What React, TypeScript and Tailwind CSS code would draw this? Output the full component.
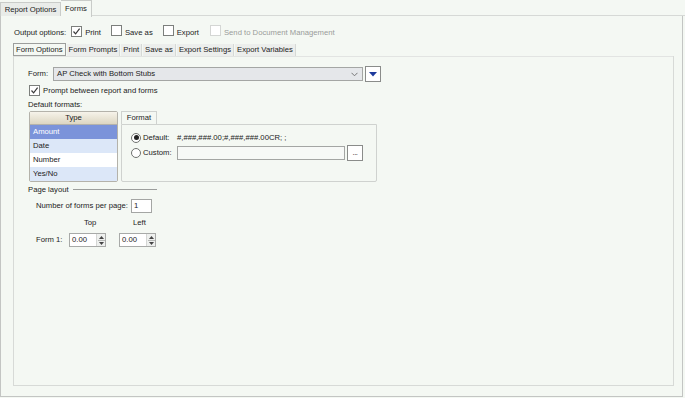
import React from "react";

function Check({ checked, disabled }: { checked?: boolean; disabled?: boolean }) {
  return (
    <span
      className={`inline-flex h-[11px] w-[11px] items-center justify-center border bg-white ${
        disabled ? "border-[#d4d6d4] bg-[#f6f7f6]" : "border-[#7c7f7c]"
      }`}
    >
      {checked && (
        <svg width="9" height="9" viewBox="0 0 9 9">
          <path d="M1.5 4.5 L3.6 6.8 L7.6 1.6" fill="none" stroke="#3a3a3a" strokeWidth="1.2" />
        </svg>
      )}
    </span>
  );
}

function Radio({ on }: { on?: boolean }) {
  return (
    <span className="inline-flex h-[10px] w-[10px] items-center justify-center rounded-full border border-[#6f726f] bg-white">
      {on && <span className="h-[5px] w-[5px] rounded-full bg-[#222]" />}
    </span>
  );
}

function Spinner({ value }: { value: string }) {
  return (
    <div className="flex h-[14px] w-[37px] border border-[#a8aaa8] bg-white">
      <span className="flex-1 pl-[2px] leading-[12px]">{value}</span>
      <div className="flex w-[9px] flex-col items-center justify-center gap-[1px] border-l border-[#d4d6d4] bg-[#eef0ee]">
        <svg width="5" height="3" viewBox="0 0 5 3">
          <path d="M0 3 L2.5 0 L5 3Z" fill="#444" />
        </svg>
        <div className="h-px w-[7px] bg-[#b8bab8]" />
        <svg width="5" height="3" viewBox="0 0 5 3">
          <path d="M0 0 L5 0 L2.5 3Z" fill="#444" />
        </svg>
      </div>
    </div>
  );
}

const subTabs = ["Form Prompts", "Print", "Save as", "Export Settings", "Export Variables"];

const types = [
  { name: "Amount", cls: "bg-[#7b93da] text-white" },
  { name: "Date", cls: "bg-[#dce7f8]" },
  { name: "Number", cls: "bg-white" },
  { name: "Yes/No", cls: "bg-[#dce7f8]" },
];

export default function App() {
  return (
    <div
      className="flex h-[398px] w-[685px] flex-col bg-[#f4f8f3] text-[7.7px] text-[#222]"
      style={{ fontFamily: '"Liberation Sans", Arial, sans-serif' }}
    >
      {/* top tabs */}
      <div className="flex h-[16px] items-end bg-[#f4f8f3]">
        <div className="flex h-[14px] w-[61px] items-center justify-center border border-b-0 border-[#c9ccc9] bg-[#e9ece9]">
          Report Options
        </div>
        <div className="relative top-px flex h-[17px] w-[31px] items-center justify-center border border-b-0 border-l-0 border-[#c9ccc9] bg-[#f4f8f3]">
          Forms
        </div>
        <div className="flex-1 border-b border-[#d6d9d6]" />
      </div>

      <div className="mb-[1px] mr-[2px] flex flex-1 flex-col border border-t-0 border-[#c3c5c3] pb-[10px] pl-[12px] pr-[8px]">
        {/* output options */}
        <div className="flex h-[25px] items-center pt-[8px]">
          <span className="ml-px">Output options:</span>
          <span className="ml-[5px]"><Check checked /></span>
          <span className="ml-[3px]">Print</span>
          <span className="ml-[10px]"><Check /></span>
          <span className="ml-[3px]">Save as</span>
          <span className="ml-[10px]"><Check /></span>
          <span className="ml-[3px]">Export</span>
          <span className="ml-[11px]"><Check disabled /></span>
          <span className="ml-[3px] text-[#9a9c9a]">Send to Document Management</span>
        </div>

        {/* sub tabs */}
        <div className="mt-[3px] flex h-[12px] items-end">
          <div className="flex h-[13px] items-center border border-[#9c9e9c] bg-[#f4f8f3] px-[2px]">Form Options</div>
          {subTabs.map((t) => (
            <div key={t} className="ml-[1px] flex h-[12px] items-center border-r border-[#d6d9d6] bg-[#eceeec] px-[2px]">
              {t}
            </div>
          ))}
        </div>

        {/* inner panel */}
        <div className="flex flex-1 flex-col border border-t-0 border-[#d7dad7] pl-[14px] pt-[10px] shadow-[inset_0_1px_0_#e2e4e2]">
          <div className="flex items-center">
            <span className="w-[25px]">Form:</span>
            <div className="flex h-[14px] w-[310px] items-center justify-between border border-[#a4a6a4] bg-[#e5e7ea] pl-[3px] pr-[4px]">
              <span>AP Check with Bottom Stubs</span>
              <svg width="7" height="5" viewBox="0 0 7 5">
                <path d="M0.5 0.8 L3.5 3.8 L6.5 0.8" fill="none" stroke="#777" strokeWidth="1" />
              </svg>
            </div>
            <div className="ml-[2px] flex h-[16px] w-[16px] items-center justify-center border border-[#8a8c8a] bg-white">
              <svg width="8" height="5" viewBox="0 0 8 5">
                <path d="M0 0 L8 0 L4 4.5Z" fill="#1d3a9c" />
              </svg>
            </div>
          </div>

          <div className="mt-[3px] flex items-center pl-[1px]">
            <Check checked />
            <span className="ml-[3px]">Prompt between report and forms</span>
          </div>

          <div className="mt-[2px]">Default formats:</div>

          <div className="mt-[1px] flex items-start pl-[1px]">
            <div className="flex w-[89px] flex-col rounded-[2px] border border-[#b4b2aa] bg-white">
              <div className="flex h-[13px] items-center justify-center border-b border-[#b4b2aa] bg-gradient-to-b from-[#f6f3ea] to-[#ddd6c2]">
                Type
              </div>
              {types.map((r) => (
                <div key={r.name} className={`flex h-[14px] items-center pl-[3px] ${r.cls}`}>
                  {r.name}
                </div>
              ))}
            </div>

            <div className="ml-[3px] flex flex-col">
              <div className="flex h-[13px] w-[36px] items-center justify-center border border-b-0 border-[#cfd2cf] bg-[#f4f8f3]">
                Format
              </div>
              <div className="flex h-[58px] w-[256px] flex-col rounded-b-[2px] border border-[#cfd2cf] pl-[9px] pt-[7px]">
                <div className="flex items-center">
                  <Radio on />
                  <span className="ml-[2px] w-[34px]">Default:</span>
                  <span>#,###,###.00;#,###,###.00CR; ;</span>
                </div>
                <div className="mt-px flex items-center">
                  <Radio />
                  <span className="ml-[2px] w-[34px]">Custom:</span>
                  <div className="h-[14px] w-[168px] border border-[#a4a6a4] bg-[#f7f9f7]" />
                  <div className="ml-[2px] flex h-[16px] w-[16px] items-end justify-center border border-[#8a8c8a] bg-white pb-[3px] text-[#222]">
                    <span className="leading-none tracking-[-0.5px]">...</span>
                  </div>
                </div>
              </div>
            </div>
          </div>

          <div className="mt-[2px] flex items-center">
            <span>Page layout</span>
            <div className="ml-[4px] h-px w-[84px] bg-[#9c9e9c]" />
          </div>

          <div className="mt-[3px] flex items-center pl-[8px]">
            <span>Number of forms per page:</span>
            <div className="ml-[3px] flex h-[14px] w-[21px] items-center border border-[#a4a6a4] bg-white pl-[2px]">1</div>
          </div>

          <div className="mt-[4px] flex pl-[56px]">
            <span className="w-[49px]">Top</span>
            <span>Left</span>
          </div>

          <div className="mt-[5px] flex items-center pl-[8px]">
            <span className="w-[33px]">Form 1:</span>
            <Spinner value="0.00" />
            <span className="ml-[13px]"><Spinner value="0.00" /></span>
          </div>
        </div>
      </div>
    </div>
  );
}
